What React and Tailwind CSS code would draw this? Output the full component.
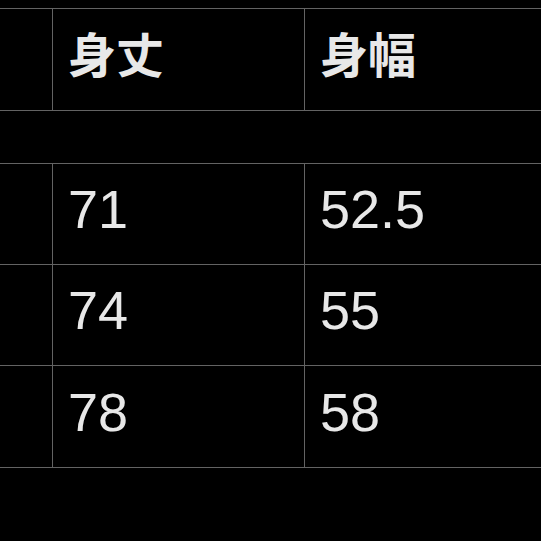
export default function App() {
  const rows = [
    ["71", "52.5", "h-[101px]"],
    ["74", "55", "h-[101px]"],
    ["78", "58", "h-[102px]"],
  ];
  const line = "border-[#636363]";
  return (
    <div className="w-[541px] h-[541px] bg-black overflow-hidden pt-[8px] text-[#e8e8e8]">
      <div className={`grid grid-cols-[53px_252px_1fr] h-[103px] border-t border-b ${line}`}>
        <div className={`border-r ${line}`} />
        <div className={`border-r ${line} flex items-center pl-[15px] pb-[16px] text-[48px] font-bold leading-none`} style={{ fontFamily: '"Noto Sans CJK JP", "Noto Sans", sans-serif' }}>
          身丈
        </div>
        <div className="flex items-center pl-[15px] pb-[16px] text-[48px] font-bold leading-none" style={{ fontFamily: '"Noto Sans CJK JP", "Noto Sans", sans-serif' }}>
          身幅
        </div>
      </div>
      <div className={`h-[53px] border-b ${line}`} />
      {rows.map(([a, b, h]) => (
        <div key={a} className={`grid grid-cols-[53px_252px_1fr] ${h} border-b ${line}`}>
          <div className={`border-r ${line}`} />
          <div className={`border-r ${line} flex items-center pl-[15px] pb-[10px] text-[54px] leading-none font-['Liberation_Sans',Arial,sans-serif]`}>
            {a}
          </div>
          <div className="flex items-center pl-[15px] pb-[10px] text-[54px] leading-none font-['Liberation_Sans',Arial,sans-serif]">
            {b}
          </div>
        </div>
      ))}
    </div>
  );
}
